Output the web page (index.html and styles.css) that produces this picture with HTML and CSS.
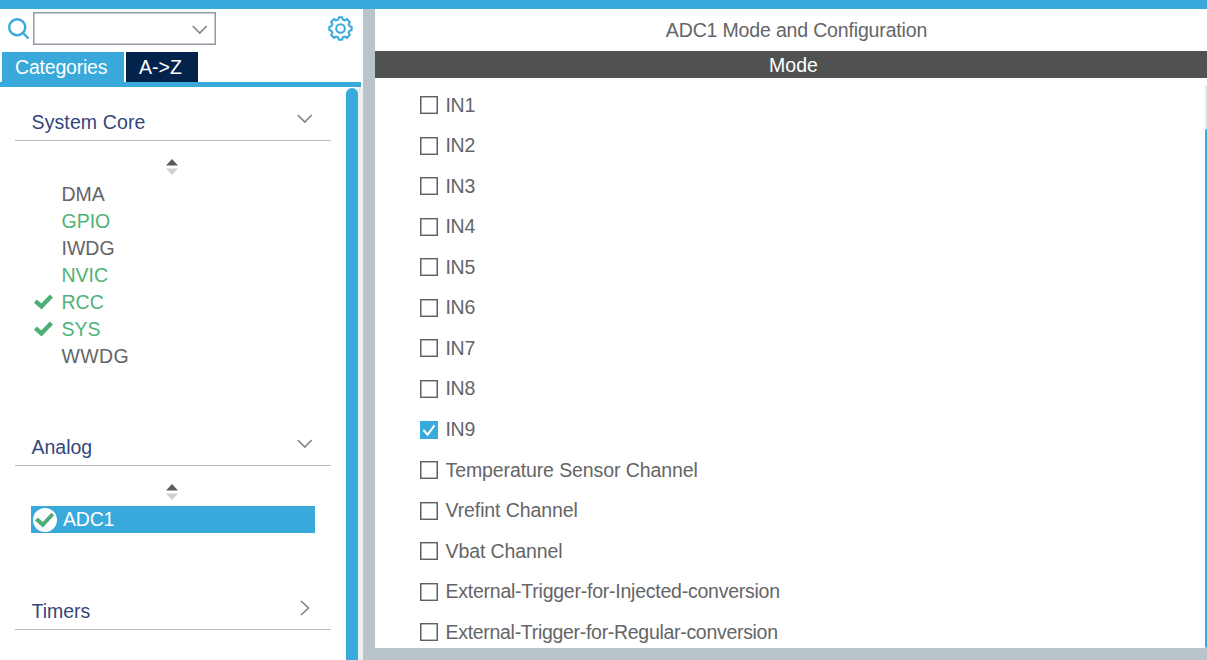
FILE: index.html
```html
<!DOCTYPE html>
<html lang="en">
<head>
<meta charset="utf-8">
<title>ADC1 Mode and Configuration</title>
<link rel="stylesheet" href="styles.css">
</head>
<body>
<div class="app">
  <aside class="sidebar">
    <div class="toolbar">
      <svg class="search-icon" viewBox="0 0 22 22"><circle cx="9.2" cy="9.2" r="8"/><path d="M15 15l5.5 5.5"/></svg>
      <div class="combo"><svg class="chevron" viewBox="0 0 16 10"><path d="M.8 1l7 7 7-7"/></svg></div>
      <svg class="gear" viewBox="-12.5 -12.5 25 25"><path d="M-1.5-11.2H1.5L2.5-8.9L4.5-8.1L6.4-9.4L9.4-6.4L8.1-4.5L8.9-2.5L11.2-1.5V1.5L8.9 2.5L8.1 4.5L9.4 6.4L6.4 9.4L4.5 8.1L2.5 8.9L1.5 11.2H-1.5L-2.5 8.9L-4.5 8.1L-6.4 9.4L-9.4 6.4L-8.1 4.5L-8.9 2.5L-11.2 1.5V-1.5L-8.9-2.5L-8.1-4.5L-9.4-6.4L-6.4-9.4L-4.5-8.1L-2.5-8.9Z"/><circle r="4.3"/></svg>
    </div>
    <div class="tabs"><div class="tab active">Categories</div><div class="tab az">A-&gt;Z</div></div>
    <div class="tree-area">
      <div class="tree">
        <section class="group core">
          <h2 class="group-head"><span class="wide">System Core</span><svg class="chevron" viewBox="0 0 16 10"><path d="M.8 1l7 7 7-7"/></svg></h2>
          <svg class="sorter" viewBox="0 0 12 16"><path class="up" d="M6 0l6 6.5H0z"/><path class="down" d="M0 9.5h12L6 16z"/></svg>
          <ul class="items">
            <li>DMA</li>
            <li class="on">GPIO</li>
            <li>IWDG</li>
            <li class="on">NVIC</li>
            <li class="on"><svg class="tick" viewBox="0 0 20 16"><path d="M2.4 7.2l6 5.2L18.4 2"/></svg>RCC</li>
            <li class="on"><svg class="tick" viewBox="0 0 20 16"><path d="M2.4 7.2l6 5.2L18.4 2"/></svg>SYS</li>
            <li class="wwdg">WWDG</li>
          </ul>
        </section>
        <section class="group analog">
          <h2 class="group-head"><span>Analog</span><svg class="chevron" viewBox="0 0 16 10"><path d="M.8 1l7 7 7-7"/></svg></h2>
          <svg class="sorter" viewBox="0 0 12 16"><path class="up" d="M6 0l6 6.5H0z"/><path class="down" d="M0 9.5h12L6 16z"/></svg>
          <div class="selected"><svg class="badge" viewBox="0 0 24 24"><circle cx="12" cy="12" r="12"/><path d="M3.4 11l6.4 5.8L19.8 6"/></svg>ADC1</div>
        </section>
        <section class="group">
          <h2 class="group-head"><span>Timers</span><svg class="chevron side" viewBox="0 0 10 16"><path d="M1 1l7.5 7L1 15"/></svg></h2>
        </section>
      </div>
      <div class="scroll"><div class="thumb"></div></div>
    </div>
  </aside>
  <main class="panel">
    <h1 class="title">ADC1 Mode and Configuration</h1>
    <div class="mode">Mode</div>
    <div class="panel-body">
      <div class="options">
        <div class="option"><i class="box"></i>IN1</div>
        <div class="option"><i class="box"></i>IN2</div>
        <div class="option"><i class="box"></i>IN3</div>
        <div class="option"><i class="box"></i>IN4</div>
        <div class="option"><i class="box"></i>IN5</div>
        <div class="option"><i class="box"></i>IN6</div>
        <div class="option"><i class="box"></i>IN7</div>
        <div class="option"><i class="box"></i>IN8</div>
        <div class="option"><i class="box checked"><svg viewBox="0 0 18 18"><path d="M3.4 9l4.2 4.7L14.5 4.3"/></svg></i>IN9</div>
        <div class="option words"><i class="box"></i>Temperature Sensor Channel</div>
        <div class="option words"><i class="box"></i>Vrefint Channel</div>
        <div class="option words"><i class="box"></i>Vbat Channel</div>
        <div class="option long"><i class="box"></i>External-Trigger-for-Injected-conversion</div>
        <div class="option longer"><i class="box"></i>External-Trigger-for-Regular-conversion</div>
      </div>
      <div class="panel-scroll"><div class="panel-thumb"></div></div>
    </div>
  </main>
</div>
</body>
</html>
```
FILE: styles.css
```css
* { box-sizing: border-box; }
body { margin: 0; font-family: "Liberation Sans", Arial, sans-serif; font-size: 19.5px; color: #646567; background: #fff; }
svg { display: block; flex: none; fill: none; }
h1, h2, ul { margin: 0; padding: 0; font-size: inherit; font-weight: 400; list-style: none; }

.app { height: 660px; border-top: 9px solid #39a9dc; display: grid; grid-template-columns: 363px 1fr; overflow: hidden; }
.sidebar { display: flex; flex-direction: column; min-height: 0; }
.toolbar { height: 43px; display: flex; align-items: flex-start; padding: 3px 10px 0 8px; }
.search-icon { width: 22px; height: 22px; margin-top: 6px; stroke: #39a9dc; stroke-width: 2.4; }
.combo { width: 183px; height: 33px; margin-left: 3px; border: 1px solid #929aa3; box-shadow: inset 0 0 0 .5px #929aa3; display: flex; align-items: center; justify-content: flex-end; padding: 2px 7px 0 0; }
.chevron { width: 16px; height: 10px; stroke: #858585; stroke-width: 1.7; }
.gear { width: 25px; height: 25px; margin: 4px 0 0 auto; stroke: #39a9dc; stroke-width: 2; }
.tabs { height: 35px; padding-left: 2px; display: flex; gap: 2px; border-bottom: 5px solid #39a9dc; margin-right: 2px; }
.tab { height: 30px; line-height: 30px; color: #fff; background: #03234b; }
.active { width: 122px; padding-left: 13px; background: #39a9dc; letter-spacing: -.2px; }
.az { width: 72px; padding-left: 13px; }

.tree-area { flex: 1; min-height: 0; display: flex; }
.tree { flex: 1; padding: 18px 15px 0 15px; }
.group-head { height: 36px; border-bottom: 1px solid #b1bdc4; padding: 0 18px 0 16.5px; display: flex; justify-content: space-between; line-height: 35px; color: #34477c; }
.group-head .chevron { margin-top: 9px; }
.group-head .chevron.side { width: 10px; height: 16px; margin: 6px 3px 0 0; }
.wide { letter-spacing: .12px; }
.core { height: 325px; }
.analog { height: 164px; }
.sorter { width: 12px; height: 16px; margin: 18px 0 0 151px; }
.up { fill: #5c5c5c; }
.down { fill: #cfcfcf; }
.items { margin-top: 6px; padding-left: 46.5px; line-height: 27px; }
.items li { display: flex; align-items: center; height: 27px; }
.items .wwdg { letter-spacing: .4px; }
.items .on { color: #4fb277; }
.tick { width: 20px; height: 16px; margin: -2px 9px 0 -29px; stroke: #4cae74; stroke-width: 4.4; }
.selected { width: 284px; height: 27px; margin: 6px 0 0 16px; padding-left: 2px; display: flex; align-items: center; gap: 6px; background: #39a9dc; color: #fff; letter-spacing: -.2px; }
.badge { width: 24px; height: 24px; stroke: #4cae74; stroke-width: 4; }
.badge circle { fill: #fff; stroke: none; }
.scroll { width: 17px; padding-top: 1px; background: linear-gradient(90deg, #fff 11px, #edeff1 11px); }
.thumb { width: 12px; height: 100%; border-radius: 6px 6px 0 0; background: #39a9dc; }

.panel { display: flex; flex-direction: column; border-left: 12px solid #b8c4ca; border-bottom: 12px solid #b8c4ca; min-height: 0; }
.title { height: 42px; line-height: 43px; text-align: center; letter-spacing: -.16px; padding-left: 11px; }
.mode { height: 27px; line-height: 28px; text-align: center; color: #fff; background: #505251; padding-left: 5px; }
.panel-body { flex: 1; min-height: 0; display: flex; justify-content: space-between; }
.options { padding: 7px 0 0 45px; overflow: hidden; }
.option { height: 40.54px; display: flex; align-items: center; gap: 7.5px; letter-spacing: -.3px; white-space: nowrap; }
.words { letter-spacing: -.1px; }
.long { letter-spacing: -.24px; }
.longer { letter-spacing: -.3px; }
.box { width: 18px; height: 18px; border: 1px solid #606060; box-shadow: inset 0 0 0 .6px #777; }
.checked { border: 0; box-shadow: none; background: #39a9dc; }
.checked path { stroke: #fff; stroke-width: 2; }
.panel-scroll { width: 2px; margin-top: 7px; padding-top: 44px; background: #dcebf6; }
.panel-thumb { height: 100%; background: #39a9dc; border-radius: 2px 0 0 2px; }
```
